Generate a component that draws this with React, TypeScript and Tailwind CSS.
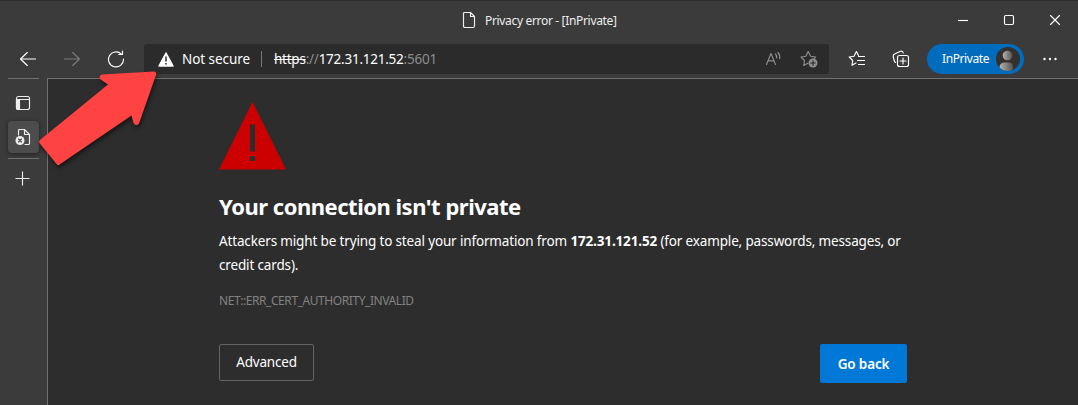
import type { ReactNode } from "react";

type IconProps = { w: number; h: number; className?: string; children: ReactNode };

function Icon({ w, h, className = "", children }: IconProps) {
  return (
    <svg
      width={w}
      height={h}
      viewBox={`0 0 ${w} ${h}`}
      fill="none"
      stroke="currentColor"
      strokeWidth="1.15"
      strokeLinecap="round"
      strokeLinejoin="round"
      className={`block shrink-0 ${className}`}
    >
      {children}
    </svg>
  );
}

function TitleBar() {
  return (
    <header className="flex h-10 shrink-0 items-start border-t border-[#2b2b2b]">
      <div className="flex h-[38px] flex-1 items-center pl-[462px]">
        <Icon w={14} h={18} className="text-[#eeeeee]">
          <path d="M2.5 1.5H8.5L12.5 5.5V15Q12.5 16.5 11 16.5H3Q1.5 16.5 1.5 15V2.5Q1.5 1.5 2.5 1.5Z M8.5 1.5V5.5H12.5" />
        </Icon>
        <span className="mt-[2px] ml-[9px] text-[12px] tracking-[-0.33px] text-[#eeeeee]">Privacy error - [InPrivate]</span>
      </div>
      <div className="flex h-[38px] items-center gap-[34px] pr-[17px] text-white">
        <Icon w={12} h={12}><path d="M1 6.5H11" strokeLinecap="butt" /></Icon>
        <Icon w={12} h={12}><rect x="1.500" y="1.500" width="9" height="9" rx="1.200" /></Icon>
        <Icon w={12} h={12}><path d="M1.500 1.500L10.500 10.500M10.500 1.500L1.500 10.500" /></Icon>
      </div>
    </header>
  );
}

function AddressBar() {
  return (
    <div className="flex h-[30px] w-[685px] shrink-0 items-center rounded-[3px] bg-[#2b2b2b] pr-[10px] pl-[14px]">
      <svg width="16" height="15" viewBox="0 0 16 15" className="block shrink-0">
        <path d="M8 1L15 14H1Z" fill="#fff" stroke="#fff" strokeWidth="1.500" strokeLinejoin="round" />
        <path d="M8 4.500V9.500M8 11V12.600" stroke="#2b2b2b" strokeWidth="1.500" />
      </svg>
      <span className="mt-px ml-[8px] w-[68px] text-[13.5px] tracking-[-0.05px] whitespace-nowrap text-white">Not secure</span>
      <span className="ml-[11px] h-4 w-px bg-[#777777]" />
      <span className="mt-px ml-[12px] flex-1 text-[13.5px] tracking-[-0.24px] whitespace-nowrap text-[#8d8d8d]">
        <span className="text-white line-through">https</span>://<span className="text-white">172.31.121.52</span>:5601
      </span>
      <Icon w={17} h={16} className="text-[#8d8d8d]">
        <path d="M1.500 13.500L6 2.500L10.500 13.500M3 9.800H9M10.500 3Q12 4.700 11.600 7M13 1.500Q15.500 4.300 14.500 7.700" />
      </Icon>
      <Icon w={18} h={18} className="mr-px ml-[18px] text-[#8d8d8d]">
        <path d="M7.800 13.200L3.800 15.500L4.500 10.500L1 7L5.800 6.200L8.200 1.500L10.600 6.200L15.700 7L14 8.700" />
        <circle cx="13" cy="13" r="4.500" fill="currentColor" stroke="none" />
        <path d="M10.800 13H15.200M13 10.800V15.200" stroke="#2b2b2b" />
      </Icon>
    </div>
  );
}

function Avatar() {
  return (
    <svg width="24" height="24" viewBox="0 0 24 24" className="block shrink-0">
      <defs>
        <linearGradient id="person" x1="0" x2="1">
          <stop offset="0" stopColor="#b5b3b0" />
          <stop offset="1" stopColor="#55514e" />
        </linearGradient>
        <clipPath id="disc"><circle cx="12" cy="12" r="12" /></clipPath>
      </defs>
      <g clipPath="url(#disc)">
        <rect width="24" height="24" fill="#33302e" />
        <circle cx="11.500" cy="8.500" r="4.800" fill="url(#person)" />
        <path d="M3.500 24V20Q4 15.500 8.500 15.500H13Q17 15.500 17 20V24Z" fill="url(#person)" />
      </g>
    </svg>
  );
}

function Toolbar() {
  return (
    <div className="flex h-[38px] shrink-0 items-center pl-[19px] text-white">
      <Icon w={18} h={16}><path d="M8.300 1.500L1.500 8L8.300 14.500M1.500 8H16.500" /></Icon>
      <Icon w={18} h={16} className="ml-[26px] text-[#7b7b7b]"><path d="M9.700 1.500L16.500 8L9.700 14.500M1.500 8H16.500" /></Icon>
      <Icon w={18} h={18} className="ml-[26px]">
        <path d="M14.400 4.200A7.500 7.500 0 1 0 16.500 9M15.500 1V4.500H11.700" />
      </Icon>
      <div className="ml-[19px]"><AddressBar /></div>
      <Icon w={18} h={18} className="ml-[19px]">
        <path d="M8 13L4 15.300L4.700 10.500L1.200 7L6 6.200L8.400 1.500L10.500 5.500M10.500 6.500H16.500M9.500 10.500H16.500M10.500 14.500H16.500" />
      </Icon>
      <Icon w={18} h={18} className="ml-[26px]">
        <rect x="5.500" y="5.500" width="11" height="11" rx="2" />
        <path d="M8 11H14M11 8V14M3.500 12.500Q2.600 12 2.200 10.500L1.200 6.500Q.9 4.500 2.700 4L8.500 1.300Q10.500 .6 11.300 3" />
      </Icon>
      <div className="ml-[17px] flex h-[30px] w-[97px] items-center justify-between rounded-full bg-[#006cbe] pr-1 pl-[15px]">
        <span className="text-[12px] tracking-[-0.4px]">InPrivate</span>
        <Avatar />
      </div>
      <svg width="16" height="4" viewBox="0 0 16 4" fill="#fff" className="ml-[18px] block">
        <circle cx="2.500" cy="2" r="1.200" /><circle cx="8" cy="2" r="1.200" /><circle cx="13.500" cy="2" r="1.200" />
      </svg>
    </div>
  );
}

function Sidebar() {
  return (
    <aside className="flex w-[47px] shrink-0 flex-col items-start pl-2 text-[#eeeeee]">
      <span className="h-px w-[31px] bg-[#717171]" />
      <Icon w={16} h={16} className="mt-4 ml-[7px]">
        <rect x="1.500" y="1.500" width="13" height="13" rx="2" />
        <path d="M2 4.500H14" />
        <path d="M1.500 4.500H4.500V14.500H3Q1.500 14.500 1.500 13Z" fill="currentColor" />
      </Icon>
      <div className="mt-[10px] flex h-8 w-[31px] items-center rounded bg-[#4c4c4c] pl-[7px] shadow-[0_1px_4px_#222]">
        <Icon w={16} h={18}>
          <path d="M3.500 7V2.500Q3.500 1.500 4.500 1.500H9.500L14.500 6.500V15.500Q14.500 16.500 13.500 16.500H10M9.500 1.500V6.500H14.500" />
          <circle cx="5" cy="12.500" r="4.500" fill="#eee" stroke="none" />
          <path d="M3.500 11L6.500 14M6.500 11L3.500 14" stroke="#444" />
        </Icon>
      </div>
      <span className="mt-[5px] h-px w-[31px] bg-[#717171]" />
      <Icon w={16} h={16} className="mt-[12px] ml-[7px]"><path d="M7.500 .5V14.500M.5 7.500H14.500" strokeLinecap="butt" /></Icon>
    </aside>
  );
}

function ErrorPage() {
  return (
    <main className="flex-1 border-t border-l border-[#707070] bg-[#2d2d2d] pt-[23px] pl-[171px] text-white">
      <svg width="67" height="68" viewBox="0 0 67 68" className="block">
        <path d="M33.500 0L67 67.500H0Z" fill="#cc0000" />
        <path d="M31 22.500H36V49.500H31ZM31 54H36V59H31Z" fill="#2d2d2d" />
      </svg>
      <h1 className="mt-5 h-8 text-[22px] leading-8 font-bold tracking-[-0.49px] whitespace-nowrap">Your connection isn't private</h1>
      <p className="mt-[7px] w-[688px] text-[13.5px] leading-6 tracking-[-0.15px]">
        <span className="block whitespace-nowrap">
          Attackers might be trying to steal your information from <strong>172.31.121.52</strong> (for example, passwords, messages, or
        </span>
        <span className="block">credit cards).</span>
      </p>
      <p className="mt-[14px] text-[12px] leading-5 tracking-[-0.43px] text-[#828282]">NET::ERR_CERT_AUTHORITY_INVALID</p>
      <div className="mt-[33px] flex w-[688px] items-start justify-between">
        <button className="h-[37px] w-[95px] rounded-[2px] border border-[#646464] text-[13.5px] tracking-[-0.2px]">Advanced</button>
        <button className="h-[39px] w-[87px] rounded-[2px] bg-[#0078d7] pt-px text-[13.5px] font-semibold tracking-[-0.15px]">Go back</button>
      </div>
    </main>
  );
}

function PointerArrow() {
  return (
    <svg
      width="130"
      height="106"
      viewBox="0 0 130 106"
      className="absolute top-[66px] left-[34px] drop-shadow-[1px_3px_2px_rgba(0,0,0,0.5)]"
    >
      <path
        d="M6 74L74 18.500L66 13Q64.500 9.500 68 8.500L120 5.500Q122.800 5.500 122 9L105 57.500Q102 61 99.500 57L97.500 49.500L25.500 98.500Q24 100 22.500 98L5.500 77Q4.500 75.500 6 74Z"
        fill="#ff4343"
      />
    </svg>
  );
}

export default function App() {
  return (
    <div className="relative flex h-[405px] w-[1078px] flex-col overflow-hidden bg-[#3b3b3b] font-['Noto_Sans','Open_Sans',sans-serif]">
      <TitleBar />
      <Toolbar />
      <div className="flex flex-1">
        <Sidebar />
        <ErrorPage />
      </div>
      <PointerArrow />
    </div>
  );
}
